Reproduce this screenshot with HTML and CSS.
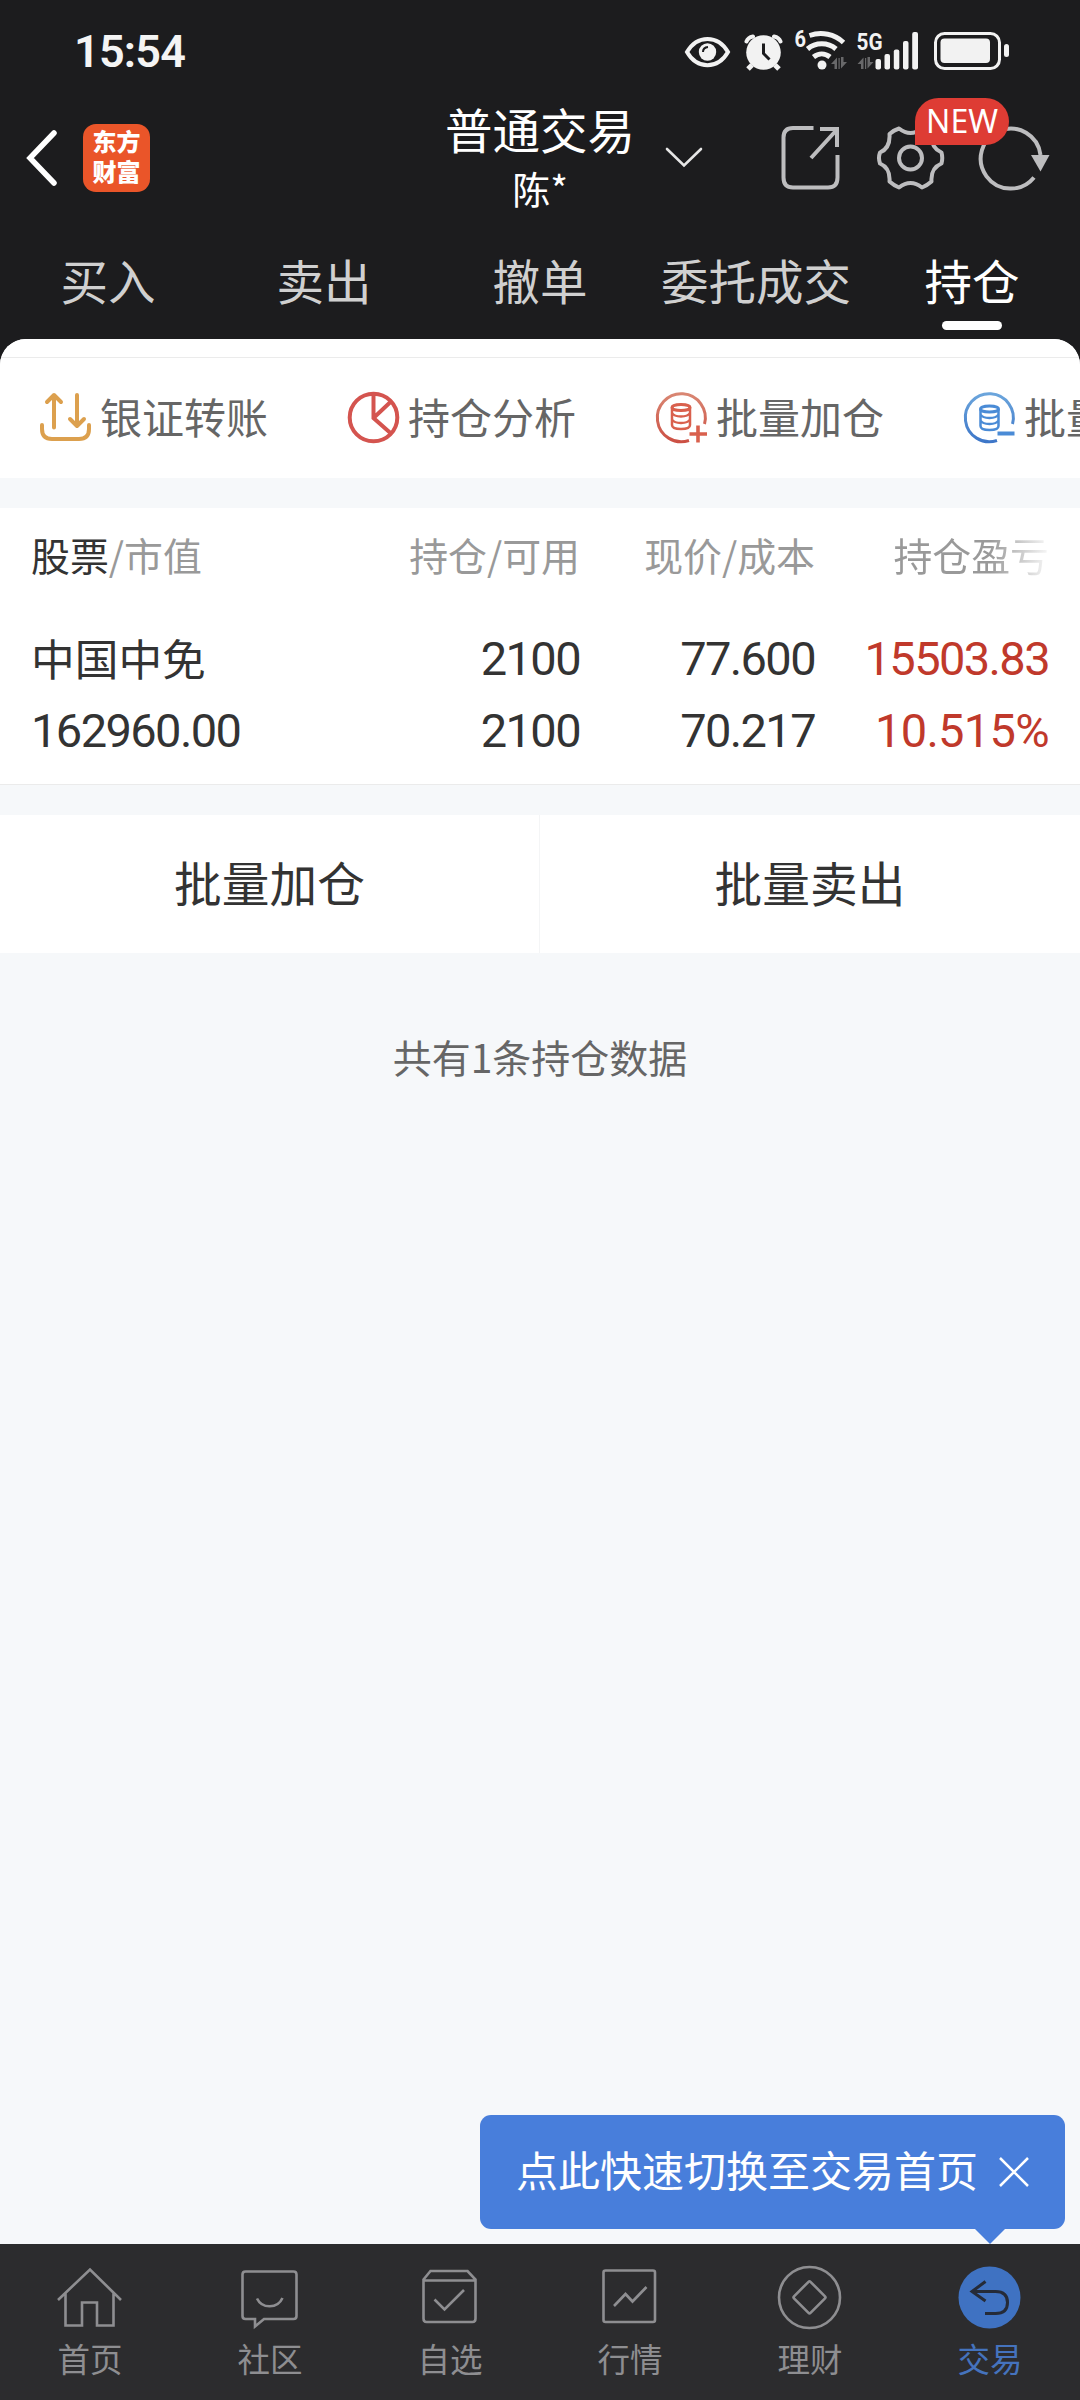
FILE: index.html
```html
<!DOCTYPE html>
<html lang="zh-CN">
<head>
<meta charset="utf-8">
<title>普通交易 - 持仓</title>
<link rel="stylesheet" href="styles.css">
</head>
<body>
<div class="app">
  <header class="top">
    <div class="status">
      <span class="clock">15:54</span>
      <svg class="status-icons" width="340" height="50" viewBox="680 25 340 50">
        <g fill="none" stroke="#f2f2f2" stroke-width="4">
          <path d="M687 52c10-17.500 31-17.500 41 0c-10 17.500-31 17.500-41 0z"/>
          <path d="M746.500 41.500q1.500-4 6.500-5M780.500 41.500q-1.500-4-6.500-5" stroke-linecap="round"/>
          <path d="M752 65l-4 4M775 65l4 4" stroke-width="5"/>
          <path d="M809.500 35.500c12-4 25-1.500 34 7" stroke-width="5"/>
          <path d="M807.500 49c8-7 20.500-7 28.500 0" stroke-width="5"/>
          <path d="M813.500 57c5-4 11.500-4 16.500 0" stroke-width="5"/>
          <rect x="935.500" y="33.500" width="64" height="35" rx="9" stroke-width="3"/>
        </g>
        <g fill="#f2f2f2">
          <circle cx="707.500" cy="52" r="8.700"/>
          <circle cx="763.500" cy="52.500" r="17.300"/>
          <circle cx="822" cy="65" r="4.500"/>
          <rect x="875.500" y="59" width="5.500" height="10.500" rx="2"/>
          <rect x="884.500" y="54" width="5.500" height="15.500" rx="2"/>
          <rect x="893.800" y="49.500" width="5.500" height="20" rx="2"/>
          <rect x="903" y="41" width="5.500" height="28.500" rx="2"/>
          <rect x="912.200" y="32" width="5.800" height="37.500" rx="2"/>
          <rect x="940.500" y="38.500" width="49.500" height="24.500" rx="4"/>
          <rect x="1004" y="44" width="5" height="13" rx="2.500"/>
        </g>
        <path d="M703 52q0-4.500 5-5" fill="none" stroke="#1c1c1e" stroke-width="2"/>
        <path d="M763.500 43.500v10l6 6" fill="none" stroke="#1c1c1e" stroke-width="3"/>
        <g fill="#68686a">
          <path d="M831 64l6-6.500v11.500h-2.500v-5zM847 62l-6 6.500v-11.500h2.500v5zM838.500 58h1.200v11h-1.200z"/>
          <path d="M857.500 64l6-6.500v11.500h-2.500v-5zM873.500 62l-6 6.500v-11.500h2.500v5zM865 58h1.200v11h-1.200z"/>
        </g>
        <text class="net" x="794.500" y="46.500" textLength="11.500" lengthAdjust="spacingAndGlyphs">6</text>
        <text class="net" x="856.500" y="50" textLength="26" lengthAdjust="spacingAndGlyphs">5G</text>
      </svg>
    </div>

    <div class="titlebar">
      <div class="side">
        <svg width="36" height="60" viewBox="0 0 36 60"><path d="M29 5L5 30l24 25" fill="none" stroke="#fff" stroke-width="5.500" stroke-linecap="round"/></svg>
        <div class="logo">东方<br>财富</div>
      </div>
      <div class="heading">
        <div class="heading-text">
          <div class="title">普通交易</div>
          <div class="account">陈*</div>
        </div>
      </div>
      <svg class="chevron" width="40" height="26" viewBox="0 0 40 26"><path d="M3 4l17 16.500L37 4" fill="none" stroke="#e6e6e6" stroke-width="2.600" stroke-linecap="round"/></svg>
      <div class="actions">
        <svg width="62" height="68" viewBox="780 124 62 68" fill="none" stroke="#bdbdbf" stroke-width="4">
          <path d="M813.500 128H793q-9.500 0-9.500 9.500v40q0 10 9.500 10h35q9.500 0 9.500-10v-22.500"/>
          <path d="M820 129h17v18M837 129.500l-26 28.500"/>
        </svg>
        <svg width="68" height="68" viewBox="877 123 68 68" fill="none" stroke="#bdbdbf" stroke-width="4">
          <circle cx="910.500" cy="157" r="11.500"/>
          <path d="M899 127.500q11.500 9 23 0q5 1.500 9.500 5.500q-1 14 10 18.500q1.500 5.500 0 11q-11 4.500-10 18q-4.500 4-9.500 6q-11.500-9-23 0q-5-2-9.500-6q1-13.500-9.500-18q-2-5.500 0-11q10.500-4.500 9.500-18.500q4.500-4 9.500-5.500z" stroke-linejoin="round"/>
        </svg>
        <svg class="refresh" width="74" height="68" viewBox="978 123 74 68">
          <path d="M1034 176.500A30 30 0 1 1 1040.500 154" fill="none" stroke="#bdbdbf" stroke-width="4"/>
          <path d="M1031 154h18.500l-9 16.500z" fill="#bdbdbf"/>
        </svg>
        <span class="badge">NEW</span>
      </div>
    </div>

    <nav class="tabs">
      <span>买入</span><span>卖出</span><span>撤单</span><span>委托成交</span><span class="on">持仓</span>
    </nav>
  </header>

  <main class="sheet">
    <div class="tools">
      <div class="tool">
        <svg width="56" height="56" viewBox="38 390 56 56" fill="none" stroke="#dca04e" stroke-width="4" stroke-linecap="round" stroke-linejoin="round">
          <path d="M54 427.500V395M47 402l7-7 7 7M77 395v30M70 419l7 7 7-7M42 425v4q0 10 10 10h27q10 0 10-10v-4"/>
        </svg>
        <span>银证转账</span>
      </div>
      <div class="tool">
        <svg width="56" height="56" viewBox="346 390 56 56" fill="none" stroke="#d4544f" stroke-width="4">
          <circle cx="373.500" cy="417.500" r="23.800"/><path d="M373.500 394v24l17.500 15.500M373.500 418l17.500-16.500"/>
        </svg>
        <span>持仓分析</span>
      </div>
      <div class="tool">
        <svg width="56" height="56" viewBox="654 390 56 56" fill="none" stroke-width="3" stroke="#d9604d">
          <defs><linearGradient id="warm" gradientUnits="userSpaceOnUse" x1="0" y1="394" x2="0" y2="442"><stop offset="0" stop-color="#d98672"/><stop offset="1" stop-color="#cc5044"/></linearGradient></defs>
          <path d="M704.500 424A24 24 0 1 0 689 440.500" stroke="url(#warm)"/>
          <ellipse cx="681" cy="407.500" rx="9" ry="3"/>
          <path d="M672 407.500v17.500q0 4 9 4t9-4v-17.500M672 413q2 3.500 9 3.500t9-3.500M672 419.500q2 3.500 9 3.500t9-3.500" stroke-width="2.500"/>
          <path d="M698 425.500v17M689.500 434h17.500" stroke-width="3.600"/>
        </svg>
        <span>批量加仓</span>
      </div>
      <div class="tool">
        <svg width="56" height="56" viewBox="962 390 56 56" fill="none" stroke-width="3" stroke="#4a8bd6">
          <defs><linearGradient id="cool" gradientUnits="userSpaceOnUse" x1="0" y1="394" x2="0" y2="442"><stop offset="0" stop-color="#6ba5dc"/><stop offset="1" stop-color="#3d76c8"/></linearGradient></defs>
          <path d="M1012.500 424A24 24 0 1 0 997 440.500" stroke="url(#cool)"/>
          <ellipse cx="989.500" cy="409" rx="9" ry="3"/>
          <path d="M980.500 409v17q0 4 9 4t9-4v-17M980.500 414.500q2 3.500 9 3.500t9-3.500M980.500 420.500q2 3.500 9 3.500t9-3.500" stroke-width="2.500"/>
          <path d="M997.500 433.500h17" stroke-width="4"/>
        </svg>
        <span>批量卖出</span>
      </div>
    </div>

    <section class="holdings">
      <div class="row head">
        <span><b>股票</b>/市值</span><span>持仓/可用</span><span>现价/成本</span><span class="fade">持仓盈亏</span>
      </div>
      <div class="row data">
        <span class="name">中国中免</span><span>2100</span><span>77.600</span><span class="up">15503.83</span>
        <span>162960.00</span><span>2100</span><span>70.217</span><span class="up rate">10.515%</span>
      </div>
    </section>

    <div class="batch"><span>批量加仓</span><i></i><span>批量卖出</span></div>
    <p class="count">共有1条持仓数据</p>
  </main>

  <footer class="bottom">
    <div class="tip">
      <span>点此快速切换至交易首页</span>
      <svg width="32" height="32" viewBox="0 0 32 32"><path d="M2 2l28 28M30 2L2 30" stroke="#fff" stroke-width="2.500"/></svg>
    </div>
    <div class="item">
      <svg width="72" height="72" viewBox="54 2261 72 72"><path d="M58 2300l32-30.500 31 30.500M65.500 2293.500v32h16.500v-23h15v23h16.500v-32"/></svg>
      <span>首页</span>
    </div>
    <div class="item">
      <svg width="72" height="72" viewBox="234 2261 72 72"><path d="M245.500 2271.500h48q3 0 3 3v41.500q0 3-3 3h-29.500l-9 7.500v-7.500h-9.500q-3 0-3-3v-41.500q0-3 3-3z"/><path d="M257 2298.500c5 10.500 20.500 10.500 25.500-.5"/></svg>
      <span>社区</span>
    </div>
    <div class="item">
      <svg width="72" height="72" viewBox="414 2261 72 72"><path d="M423.500 2279.500l7-8.500h37l8 8.500v39q0 3.500-3 3.500h-46q-3 0-3-3.500zM423.500 2280.500h52M434.500 2299.500l10 10 19.500-19.500"/></svg>
      <span>自选</span>
    </div>
    <div class="item">
      <svg width="72" height="72" viewBox="594 2261 72 72"><rect x="603.500" y="2270.500" width="51.500" height="51.500" rx="2"/><path d="M614 2306l11.500-12 7 7.500 14-14.500"/></svg>
      <span>行情</span>
    </div>
    <div class="item">
      <svg width="72" height="72" viewBox="774 2261 72 72"><circle cx="809.500" cy="2297.500" r="30.500"/><path d="M808.500 2281.800q1-1 2 0l14.500 14.500q1 1 0 2l-14.500 14.500q-1 1-2 0l-14.500-14.500q-1-1 0-2z"/></svg>
      <span>理财</span>
    </div>
    <div class="item active">
      <svg width="72" height="72" viewBox="954 2261 72 72"><circle class="disc" cx="989.500" cy="2297.500" r="31"/><path d="M985.500 2281.500l-13.500 10 13.500 9.500M972 2291.500h23.500q12 0 12 11t-12 11h-10.500"/></svg>
      <span>交易</span>
    </div>
  </footer>
</div>
</body>
</html>
```
FILE: styles.css
```css
* { box-sizing: border-box; }
body {
  margin: 0;
  background: #1c1c1e;
  font-family: "Noto Sans CJK SC", sans-serif;
}
svg { display: block; flex: none; }
.app {
  width: 1080px;
  height: 2400px;
  display: flex;
  flex-direction: column;
  overflow: hidden;
}

/* dark header */
.top { height: 339px; flex: none; color: #fff; }
.status {
  height: 100px;
  padding: 0 60px 0 74px;
  display: flex;
  align-items: center;
  justify-content: space-between;
}
.clock {
  font: 600 45px/52px Roboto, sans-serif;
  letter-spacing: -0.8px;
  color: #f4f4f4;
  margin-top: 3px;
}
.net { font: 700 24px Roboto, sans-serif; fill: #f2f2f2; }
.titlebar {
  height: 130px;
  display: grid;
  grid-template-columns: 430px 220px 68px 1fr;
  grid-template-rows: 130px;
  align-items: center;
}
.side { display: flex; align-items: center; gap: 22px; padding: 0 0 14px 25px; }
.logo {
  width: 67px;
  height: 68px;
  padding-top: 2px;
  border-radius: 13px;
  background: #ea5529;
  text-align: center;
  font: 900 24px/30px "Noto Sans CJK SC", sans-serif;
}
.heading { display: flex; justify-content: center; padding-bottom: 17px; }
.heading-text { text-align: center; }
.title { font-size: 47.5px; line-height: 62px; }
.account { font-size: 38px; line-height: 56px; }
.chevron { margin: 0 0 15px 14px; }
.actions {
  position: relative;
  display: flex;
  align-items: center;
  padding: 0 0 15px 62px;
  gap: 35px;
}
.refresh { margin-left: -2px; }
.badge {
  position: absolute;
  left: 197px;
  top: -26px;
  width: 94px;
  height: 47px;
  border-radius: 24px 24px 24px 0;
  background: #de3c34;
  font: 32px/46px "Noto Sans", sans-serif;
  text-align: center;
}
.tabs { display: grid; grid-template-columns: repeat(5, 1fr); height: 109px; }
.tabs span {
  display: flex;
  flex-direction: column;
  align-items: center;
  font-size: 47.5px;
  line-height: 100px;
  color: #d0d0d0;
  white-space: nowrap;
}
.tabs .on { color: #fff; }
.tabs .on::after {
  content: "";
  width: 60px;
  height: 9px;
  margin-top: -9px;
  border-radius: 5px;
  background: #fff;
}

/* content sheet */
.sheet {
  flex: 1;
  background: #f6f8fa;
  border-radius: 26px 26px 0 0;
  overflow: hidden;
  color: #333;
}
.tools {
  height: 139px;
  padding: 18px 0 0 38px;
  background: linear-gradient(#fff 18px, #ebebeb 18px, #ebebeb 19px, #fff 19px);
  display: flex;
}
.tool {
  flex: none;
  width: 308px;
  display: flex;
  align-items: center;
  gap: 6px;
  font-size: 42px;
  line-height: 60px;
  color: #666;
  white-space: nowrap;
}
.tool span { padding-bottom: 4px; }
.holdings {
  margin-top: 30px;
  height: 277px;
  background: #fff;
  border-bottom: 1px solid #ebebeb;
}
.row {
  display: grid;
  grid-template-columns: 300px 249px 235px 1fr;
  padding: 0 31px;
  text-align: right;
}
.row > :nth-child(4n + 1) { text-align: left; }
.head { height: 114px; line-height: 92px; font-size: 38.9px; color: #999; }
.head b { font-weight: 400; color: #333; }
.head .fade {
  white-space: nowrap;
  color: transparent;
  background: linear-gradient(90deg, #999 62%, #f8f8f8 100%);
  -webkit-background-clip: text;
  background-clip: text;
  justify-self: end;
}
.data {
  font: 47px/72px Roboto, sans-serif;
  letter-spacing: -1.6px;
}
.data > span { padding-top: 1px; height: 72px; }
.data .name { font: 43.7px/68px "Noto Sans CJK SC", sans-serif; letter-spacing: 0; }
.data .up { color: #c0392b; }
.data .rate { letter-spacing: -0.7px; }
.batch {
  margin-top: 30px;
  height: 138px;
  background: #fff;
  display: grid;
  grid-template-columns: 539px 1px 1fr;
  align-items: center;
  text-align: center;
  font-size: 47.7px;
  line-height: 130px;
}
.batch span { height: 134px; }
.batch i { height: 138px; background: #f4f5f6; }
.count {
  margin: 73px 0 0;
  text-align: center;
  font-size: 39px;
  line-height: 60px;
  color: #666;
}

/* bottom navigation */
.bottom {
  position: relative;
  flex: none;
  height: 156px;
  background: #2c2c2e;
  display: grid;
  grid-template-columns: repeat(6, 1fr);
}
.item {
  display: flex;
  flex-direction: column;
  align-items: center;
  padding-top: 17px;
  font-size: 32.5px;
  line-height: 50px;
  color: #8e8e91;
}
.item svg { fill: none; stroke: #8e8e91; stroke-width: 2.6px; }
.item.active { color: #4573bd; }
.item.active svg { stroke: #252b38; stroke-width: 3px; }
.item .disc { fill: #3f72c2; stroke: none; }
.tip {
  position: absolute;
  right: 15px;
  bottom: 171px;
  width: 585px;
  height: 114px;
  border-radius: 11px;
  background: #487edb;
  color: #fff;
  display: flex;
  align-items: center;
  gap: 20px;
  padding: 0 35px 0 36px;
  font-size: 42px;
  line-height: 60px;
  white-space: nowrap;
}
.tip span { margin-top: -7px; }
.tip::after {
  content: "";
  position: absolute;
  right: 60px;
  top: 100%;
  border: 15px solid transparent;
  border-top-color: #487edb;
  border-bottom: 0;
}
```
